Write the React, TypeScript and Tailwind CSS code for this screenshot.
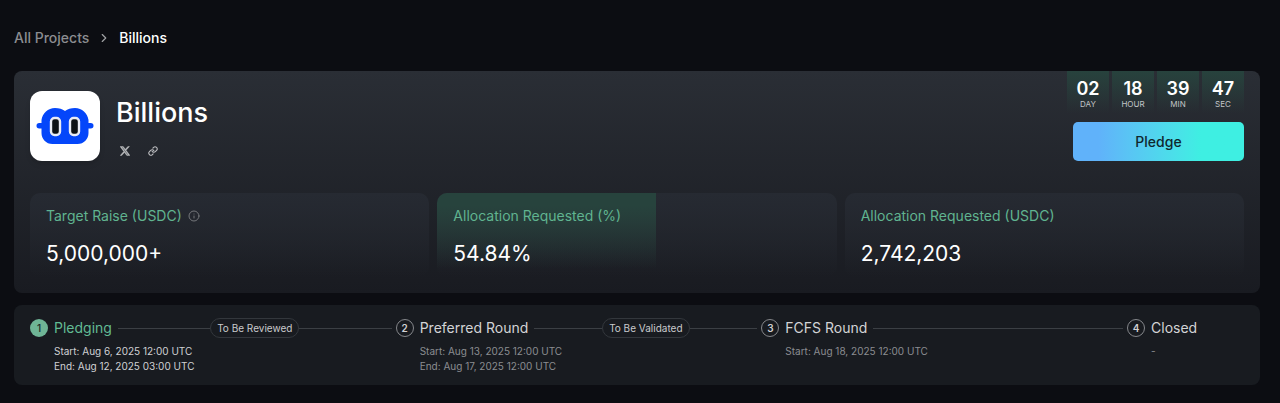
import React from "react";
import { ChevronRight, Info } from "lucide-react";

type Step = {
  title: string;
  lines: string[];
  active?: boolean;
  badge?: string;
};

const countdown = [
  { value: "02", unit: "DAY" },
  { value: "18", unit: "HOUR" },
  { value: "39", unit: "MIN" },
  { value: "47", unit: "SEC" },
];

const stats = [
  { label: "Target Raise (USDC)", value: "5,000,000+", info: true },
  { label: "Allocation Requested (%)", value: "54.84%", fill: 54.84 },
  { label: "Allocation Requested (USDC)", value: "2,742,203" },
];

const steps: Step[] = [
  {
    title: "Pledging",
    lines: ["Start: Aug 6, 2025 12:00 UTC", "End: Aug 12, 2025 03:00 UTC"],
    active: true,
    badge: "To Be Reviewed",
  },
  {
    title: "Preferred Round",
    lines: ["Start: Aug 13, 2025 12:00 UTC", "End: Aug 17, 2025 12:00 UTC"],
    badge: "To Be Validated",
  },
  { title: "FCFS Round", lines: ["Start: Aug 18, 2025 12:00 UTC"] },
  { title: "Closed", lines: ["-"] },
];

function Logo() {
  return (
    <svg viewBox="0 0 70 70" className="size-[70px] shrink-0 rounded-xl bg-white shadow-md" role="img" aria-label="Billions logo">
      <path
        d="M25 17c4 0 7.500 1 10 3 2.500-2 6-3 10-3 7 0 12.500 5 13.500 12v3h2.300a2.700 2.700 0 0 1 0 5.400h-2.300v4.600c0 6-4.500 11-11 11h-25c-6.500 0-11-5-11-11v-4.600H9.200a2.700 2.700 0 0 1 0-5.400H11.500v-3c1-7 6.500-12 13.500-12Z"
        fill="#0446fa"
      />
      <rect x="21" y="27" width="9" height="17" rx="3.500" fill="#0d1117" stroke="#e9ecf6" strokeWidth="2.400" />
      <rect x="40" y="27" width="9" height="17" rx="3.500" fill="#0d1117" stroke="#e9ecf6" strokeWidth="2.400" />
    </svg>
  );
}

function XIcon() {
  return (
    <svg viewBox="0 0 24 24" className="size-[10px]" fill="currentColor" stroke="currentColor" aria-hidden="true">
      <path
        fillRule="evenodd"
        d="M0 1h7.600l5.300 7L19 1h3.700l-8.100 9.300L24 23h-7.500l-5.800-7.700L4 23H.3l8.700-10L0 1Zm4.400 2.200 13.200 17.600h2L6.500 3.200h-2.100Z"
      />
    </svg>
  );
}

function LinkIcon() {
  return (
    <svg viewBox="0 0 24 24" className="size-[10px]" fill="none" stroke="currentColor" strokeWidth="2.600" strokeLinecap="round" strokeLinejoin="round" aria-hidden="true">
      <path d="M10 13a5 5 0 0 0 7.540.540l3-3a5 5 0 0 0-7.070-7.070l-1.720 1.710" />
      <path d="M14 11a5 5 0 0 0-7.540-.540l-3 3a5 5 0 0 0 7.070 7.070l1.710-1.710" />
    </svg>
  );
}

function StepItem({ step, number }: { step: Step; number: number }) {
  const last = number === steps.length;
  return (
    <li className={last ? "w-[117px] shrink-0" : "min-w-0 flex-1"}>
      <div className="flex h-5 items-center">
        <span
          className={
            step.active
              ? "flex size-[18px] shrink-0 items-center justify-center rounded-full bg-[#6fb596] text-[10px] font-medium text-[#1b2a26]"
              : "flex size-[18px] shrink-0 items-center justify-center rounded-full border border-[#85878b] text-[10px] font-semibold text-[#d0d1d3]"
          }
        >
          {number}
        </span>
        <h2 className={step.active ? "ml-1.5 text-sm whitespace-nowrap text-[#62bb94]" : "ml-1.5 text-sm whitespace-nowrap text-[#d3d4d6]"}>
          {step.title}
        </h2>
        {!last && (
          <div className="mr-1 ml-1.5 flex flex-1 items-center">
            <span className="h-px flex-1 bg-[#3b3f44]" />
            {step.badge && (
              <>
                <span className="rounded-full border border-[#33373c] px-1.5 text-[10px] leading-[18px] whitespace-nowrap text-[#c9cacc]">
                  {step.badge}
                </span>
                <span className="h-px flex-1 bg-[#3b3f44]" />
              </>
            )}
          </div>
        )}
      </div>
      <div className={step.active ? "mt-1.5 pl-6 text-[10px] leading-[15px] text-[#d0d1d4]" : "mt-1.5 pl-6 text-[10px] leading-[15px] text-[#8b8d91]"}>
        {step.lines.map((line) => (
          <p key={line}>{line}</p>
        ))}
      </div>
    </li>
  );
}

export default function App() {
  return (
    <div className="min-h-screen bg-[#0c0d12] pt-7 pr-5 pb-4 pl-3.5 font-['Inter',sans-serif] text-white">
      <nav aria-label="Breadcrumb" className="flex h-5 items-center gap-2 text-sm font-medium">
        <a href="#projects" className="text-[#8b8c90]">All Projects</a>
        <ChevronRight className="size-3.5 text-[#a0a1a4]" />
        <span aria-current="page">Billions</span>
      </nav>

      <main className="mt-[23px] flex flex-col gap-3">
        <section className="rounded-lg bg-linear-to-b from-[#2a2e35] to-[#191b21] px-4 pb-4">
          <div className="flex items-start justify-between">
            <div className="flex gap-4 pt-5">
              <Logo />
              <div className="pt-1">
                <h1 className="text-[27px] leading-9 font-medium">Billions</h1>
                <div className="mt-3.5 ml-1 flex h-3 items-center gap-[18px] text-[#bcbdc0]">
                  <a href="#x" aria-label="X"><XIcon /></a>
                  <a href="#website" aria-label="Website"><LinkIcon /></a>
                </div>
              </div>
            </div>
            <div className="flex flex-col items-end">
              <div className="flex gap-[3px]">
                {countdown.map((c) => (
                  <div key={c.unit} className="flex h-[42px] w-[42px] flex-col items-center bg-linear-to-b from-[#27423d] to-[#27423d]/0 pt-2">
                    <span className="text-lg leading-5 font-semibold">{c.value}</span>
                    <span className="text-[8px] leading-[10px] text-[#c2c5c7]">{c.unit}</span>
                  </div>
                ))}
              </div>
              <button type="button" className="mt-[9px] h-[39px] w-[171px] rounded-[5px] bg-linear-to-r from-[#60b2fa] from-15% to-[#3eefe2] to-75% text-sm font-medium text-[#10272d]">
                Pledge
              </button>
            </div>
          </div>

          <dl className="mt-8 grid grid-cols-3 gap-2">
            {stats.map((s) => (
              <div key={s.label} className="relative h-[84px] overflow-hidden rounded-[10px] bg-linear-to-b from-[#262a32] to-[#262a32]/0 px-4 pt-3">
                {s.fill !== undefined && (
                  <div className="absolute inset-y-0 left-0 bg-linear-to-b from-[#27433d] from-15% to-[#27433d]/0 to-90%" style={{ width: `${s.fill}%` }} />
                )}
                <dt className="relative flex items-center gap-1.5 text-sm leading-[22px] text-[#60b490]">
                  {s.label}
                  {s.info && <Info className="size-3 text-[#75777b]" />}
                </dt>
                <dd className="relative mt-3 text-[21px] leading-[30px]">{s.value}</dd>
              </div>
            ))}
          </dl>
        </section>

        <section className="rounded-lg bg-[#181b20] px-4 pt-[13px] pb-[11px]">
          <ol className="flex">
            {steps.map((step, i) => (
              <StepItem key={step.title} step={step} number={i + 1} />
            ))}
          </ol>
        </section>
      </main>
    </div>
  );
}
